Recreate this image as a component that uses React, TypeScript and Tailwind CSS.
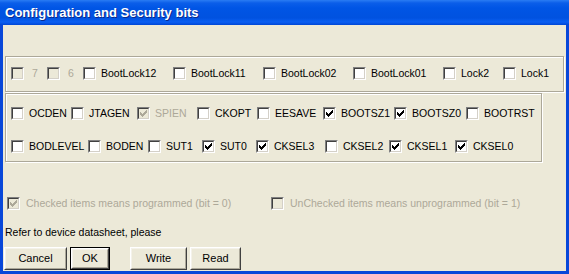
import React from "react";

const font = { fontFamily: '"Liberation Sans", Arial, sans-serif' };

function Check({ color }: { color: string }) {
  const cols: [number, number][] = [
    [3, 5],
    [4, 6],
    [5, 7],
    [6, 6],
    [7, 5],
    [8, 4],
    [9, 3],
  ];
  return (
    <svg width="13" height="13" viewBox="0 0 13 13" className="absolute left-0 top-0" shapeRendering="crispEdges">
      {cols.map(([x, y]) => (
        <rect key={x} x={x} y={y} width="1" height="3" fill={color} />
      ))}
    </svg>
  );
}

function Box({ checked, disabled }: { checked?: boolean; disabled?: boolean }) {
  return (
    <div
      className={`relative w-[13px] h-[13px] shrink-0 border border-t-[#808080] border-l-[#808080] border-r-white border-b-white ${
        disabled ? "bg-[#ece9d8]" : "bg-white"
      }`}
    >
      <div className="absolute inset-0 border border-t-[#404040] border-l-[#404040] border-r-[#d4d0c8] border-b-[#d4d0c8]" />
      {checked && (
        <div className="absolute -left-px -top-px">
          <Check color={disabled ? "#aca899" : "#000"} />
        </div>
      )}
    </div>
  );
}

function CB({
  label,
  w,
  checked,
  disabled,
  gap = "ml-[5px]",
}: {
  label: string;
  w: string;
  checked?: boolean;
  disabled?: boolean;
  gap?: string;
}) {
  return (
    <div className={`flex items-center shrink-0 ${w}`}>
      <Box checked={checked} disabled={disabled} />
      <span
        className={`${gap} text-[10.5px] leading-[13px] whitespace-nowrap ${
          disabled ? "text-[#aca899]" : "text-black"
        }`}
      >
        {label}
      </span>
    </div>
  );
}

function Btn({ label, w, def }: { label: string; w: string; def?: boolean }) {
  return (
    <div className={`${w} h-[23px] ${def ? "border border-black" : ""} shrink-0`}>
      <div className="w-full h-full border border-t-white border-l-white border-r-[#404040] border-b-[#404040] bg-[#ece9d8]">
        <div className="w-full h-full border border-t-[#f4f2ea] border-l-[#f4f2ea] border-r-[#aca899] border-b-[#aca899] flex items-center justify-center text-[11px] text-black">
          {label}
        </div>
      </div>
    </div>
  );
}

export default function App() {
  return (
    <div className="w-[569px] h-[274px] flex flex-col bg-[#0847d9]" style={font}>
      <div
        className="h-[25px] shrink-0 flex items-center pl-[5px] pt-[1px]"
        style={{
          background:
            "linear-gradient(to bottom, #2a7cf3 0px, #0b5ee9 3px, #0055e5 8px, #0052e0 18px, #0a5ff2 22px, #0046d5 25px)",
        }}
      >
        <span
          className="text-white font-bold text-[13px] leading-[16px]"
          style={{ textShadow: "1px 1px 0 #0a2a8c" }}
        >
          Configuration and Security bits
        </span>
      </div>
      <div className="flex-1 mx-[3px] mb-[3px] bg-[#ece9d8] flex flex-col">
        {/* group 1 */}
        <div className="ml-[2px] mt-[31px] w-[559px] h-[36px] border border-[#aca899] shadow-[1px_1px_0_#fff,inset_1px_1px_0_#fff] flex items-start pl-[5px] pt-[10px]">
          <CB label="7" w="w-[36px]" disabled gap="ml-[8px]" />
          <CB label="6" w="w-[36px]" disabled gap="ml-[8px]" />
          <CB label="BootLock12" w="w-[90px]" />
          <CB label="BootLock11" w="w-[90px]" />
          <CB label="BootLock02" w="w-[90px]" />
          <CB label="BootLock01" w="w-[90px]" />
          <CB label="Lock2" w="w-[60px]" />
          <CB label="Lock1" w="w-[50px]" />
        </div>
        {/* group 2 */}
        <div className="ml-[2px] mt-[1px] w-[537px] h-[69px] border border-[#aca899] shadow-[1px_1px_0_#fff,inset_1px_1px_0_#fff] flex flex-col pl-[5px] pt-[13px]">
          <div className="flex h-[13px]">
            <CB label="OCDEN" w="w-[60px]" />
            <CB label="JTAGEN" w="w-[66px]" />
            <CB label="SPIEN" w="w-[60px]" checked disabled />
            <CB label="CKOPT" w="w-[60px]" />
            <CB label="EESAVE" w="w-[66px]" />
            <CB label="BOOTSZ1" w="w-[71px]" checked />
            <CB label="BOOTSZ0" w="w-[72px]" checked />
            <CB label="BOOTRST" w="w-[60px]" />
          </div>
          <div className="flex h-[13px] mt-[20px]">
            <CB label="BODLEVEL" w="w-[77px]" />
            <CB label="BODEN" w="w-[60px]" />
            <CB label="SUT1" w="w-[54px]" />
            <CB label="SUT0" w="w-[54px]" checked />
            <CB label="CKSEL3" w="w-[69px]" checked />
            <CB label="CKSEL2" w="w-[64px]" />
            <CB label="CKSEL1" w="w-[66px]" checked />
            <CB label="CKSEL0" w="w-[60px]" checked />
          </div>
        </div>
        {/* legend */}
        <div className="flex h-[13px] mt-[35px] pl-[4px]">
          <CB label="Checked items means programmed (bit = 0)" w="w-[264px]" checked disabled gap="ml-[6px]" />
          <CB label="UnChecked items means unprogrammed (bit = 1)" w="w-[260px]" disabled gap="ml-[6px]" />
        </div>
        <div className="mt-[16px] pl-[2px] text-[10.5px] leading-[13px] text-black">
          Refer to device datasheet, please
        </div>
        <div className="flex mt-[8px] pl-[1px]">
          <Btn label="Cancel" w="w-[63px]" />
          <div className="w-[3px]" />
          <Btn label="OK" w="w-[40px]" def />
          <div className="w-[20px]" />
          <Btn label="Write" w="w-[57px]" />
          <div className="w-[3px]" />
          <Btn label="Read" w="w-[51px]" />
        </div>
      </div>
    </div>
  );
}
